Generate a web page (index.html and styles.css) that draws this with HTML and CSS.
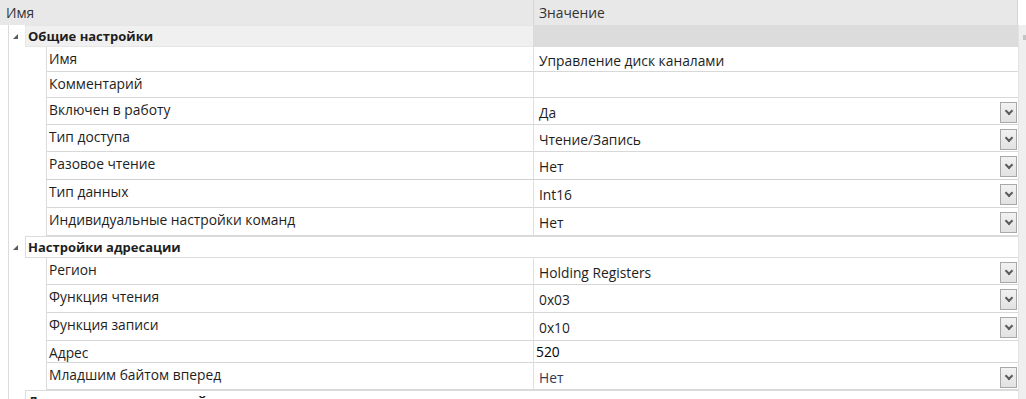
FILE: index.html
```html
<!DOCTYPE html>
<html lang="ru">
<head>
    <meta charset="UTF-8">
    <title>Свойства канала</title>
    <link rel="stylesheet" href="styles.css">
</head>
<body>
    <div class="panel">
        <div class="grid">
            <div class="header">
                <div class="head-cell">Имя</div>
                <div class="head-cell value-head">Значение</div>
            </div>

            <div class="body">
                <!-- Общие настройки -->
                <div class="category selected">
                    <span class="arrow"></span>
                    <div class="cat-name">Общие настройки</div>
                    <div class="cat-value"></div>
                </div>
                <div class="row plain">
                    <div class="name">Имя</div>
                    <div class="value">Управление диск каналами</div>
                </div>
                <div class="row plain tall">
                    <div class="name">Комментарий</div>
                    <div class="value"></div>
                </div>
                <div class="row compact">
                    <div class="name">Включен в работу</div>
                    <div class="value">Да<span class="drop"></span></div>
                </div>
                <div class="row compact">
                    <div class="name">Тип доступа</div>
                    <div class="value">Чтение/Запись<span class="drop"></span></div>
                </div>
                <div class="row">
                    <div class="name">Разовое чтение</div>
                    <div class="value">Нет<span class="drop"></span></div>
                </div>
                <div class="row thick-top">
                    <div class="name">Тип данных</div>
                    <div class="value">Int16<span class="drop"></span></div>
                </div>
                <div class="row">
                    <div class="name">Индивидуальные настройки команд</div>
                    <div class="value">Нет<span class="drop"></span></div>
                </div>

                <!-- Настройки адресации -->
                <div class="category">
                    <span class="arrow"></span>
                    <div class="cat-name">Настройки адресации</div>
                    <div class="cat-value"></div>
                </div>
                <div class="row compact">
                    <div class="name">Регион</div>
                    <div class="value">Holding Registers<span class="drop"></span></div>
                </div>
                <div class="row">
                    <div class="name">Функция чтения</div>
                    <div class="value">0x03<span class="drop"></span></div>
                </div>
                <div class="row">
                    <div class="name">Функция записи</div>
                    <div class="value">0x10<span class="drop"></span></div>
                </div>
                <div class="row short">
                    <div class="name">Адрес</div>
                    <div class="value editing">520</div>
                </div>
                <div class="row compact">
                    <div class="name">Младшим байтом вперед</div>
                    <div class="value muted">Нет<span class="drop"></span></div>
                </div>

                <div class="category">
                    <span class="arrow"></span>
                    <div class="cat-name">Дополнительные настройки</div>
                    <div class="cat-value"></div>
                </div>
            </div>
        </div>

        <div class="scrollbar"><span class="scroll-up"></span></div>
    </div>
</body>
</html>
```

FILE: styles.css
```css
body {
    margin: 0;
    font-family: "Open Sans", "Noto Sans", sans-serif;
    font-size: 13.8px;
    color: #1e1e1e;
    background: #ffffff;
    overflow: hidden;
    height: 399px;
}

.panel {
    display: flex;
    width: 1026px;
}

.grid {
    width: 1019px;
}

.scrollbar {
    width: 7px;
    margin-top: 25px;
    height: 374px;
    background: #efefef;
    border-left: 1px solid #e2e2e2;
}

.scroll-up {
    display: block;
    width: 3px;
    height: 5px;
    margin: 10px 0 0 4px;
    background: #c4c4c4;
}

/* header */

.header {
    display: grid;
    grid-template-columns: 533px 1fr;
    height: 25px;
    background: #e8e8e8;
    border-right: 1px solid #d4d4d4;
    box-sizing: border-box;
}

.head-cell {
    display: flex;
    align-items: center;
    padding-left: 6px;
    color: #333;
}

.value-head {
    border-left: 1px solid #d6d6d6;
    padding-left: 5px;
}

/* body */

.body {
    margin-left: 8px;
    border-left: 1px solid #dcdcdc;
}

.category {
    display: grid;
    grid-template-columns: 16px 508px 1fr;
    height: 22px;
    box-sizing: border-box;
}

.arrow {
    align-self: center;
    justify-self: center;
    width: 0;
    height: 0;
    margin-left: -3px;
    border-left: 5px solid transparent;
    border-bottom: 5px solid #5a5a5a;
}

.cat-name {
    display: flex;
    align-items: center;
    padding-left: 2px;
    font-size: 13px;
    font-weight: bold;
    border: 1px solid #dcdcdc;
    border-right: none;
    box-sizing: border-box;
}

.cat-value {
    border-top: 1px solid #dcdcdc;
    border-bottom: 1px solid #dcdcdc;
}

.category.selected .cat-name {
    background: #f0f0f0;
    border-color: #e6e6e6;
}

.category.selected .cat-value {
    background: #dcdcdc;
    border-color: #dcdcdc;
}

.row {
    display: grid;
    grid-template-columns: 37px 487px 1fr;
    height: 28px;
}

.row::before {
    content: "";
}

.row.compact {
    height: 27px;
}

.row.plain {
    height: 25px;
}

.row.plain.tall {
    height: 26px;
}

.row.short {
    height: 22px;
}

.name {
    padding: 2px 0 0 2px;
    border-left: 1px solid #dcdcdc;
    border-bottom: 1px solid #d8d8d8;
}

.value {
    display: flex;
    align-items: center;
    padding-left: 5px;
    padding-top: 2px;
    border-left: 1px solid #e0e0e0;
    border-bottom: 1px solid #d8d8d8;
}

.row.thick-top .name,
.row.thick-top .value {
    border-top: 1px solid #cfcfcf;
    margin-top: -1px;
}

.value.editing {
    padding-left: 2px;
    padding-top: 0;
    color: #000;
}

.value.muted {
    color: #2f3a55;
}

.drop {
    margin-left: auto;
    margin-right: 1px;
    width: 15px;
    height: 19px;
    border: 1px solid #a8a8a8;
    background: linear-gradient(#f2f2f2, #e2e2e2);
    position: relative;
}

.drop::after {
    content: "";
    position: absolute;
    left: 5px;
    top: 5px;
    width: 4px;
    height: 4px;
    border-right: 2px solid #5c5c5c;
    border-bottom: 2px solid #5c5c5c;
    transform: rotate(45deg);
}
```
